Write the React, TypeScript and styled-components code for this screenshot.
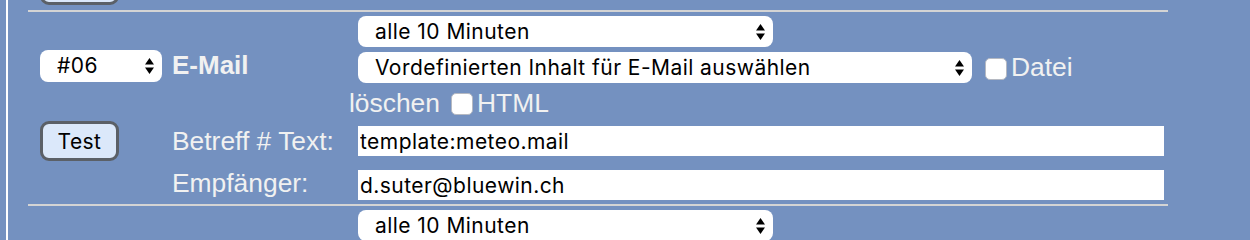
import React from "react"
import styled, { createGlobalStyle } from "styled-components"

const PANEL_BLUE = "#7491c0"
const RULE_GREY = "#d4d4d4"
const LABEL_TEXT = "#f1f1f1"
const CONTROL_FONT = `Inter, "Noto Sans", sans-serif`
const LABEL_FONT = `"Liberation Sans", Arial, sans-serif`

const GlobalStyle = createGlobalStyle`
  html, body {
    background: ${ PANEL_BLUE };
    margin: 0;
    padding: 0;
  }

  body {
    font-family: ${ LABEL_FONT };
  }

  * {
    box-sizing: border-box;
  }
`

const Page = styled.div`
  border-left: 2px solid #ffffff;
  height: 214px;
  margin-left: 6px;
  min-height: 100vh;
  overflow: hidden;
  padding-left: 20px;
`

// tail of the previous entry, only its button's bottom edge is visible
const PreviousRowTail = styled.div`
  align-items: flex-end;
  display: flex;
  height: 10px;
  overflow: hidden;
  padding: 0 0 5px 12px;
  width: 1140px;
`

// head of the next entry, only its first select peeks in
const NextRowHead = styled.div`
  padding: 4px 0 0 330px;
  width: 1140px;
`

const EntryRow = styled.div`
  border-bottom: 2px solid ${ RULE_GREY };
  border-top: 2px solid ${ RULE_GREY };
  display: grid;
  grid-template-columns: 138px 183px 1fr;
  width: 1140px;
`

const ControlCell = styled.div`
  align-items: center;
  display: flex;
  padding-left: 12px;
`

const LabelCell = styled.div`
  align-items: center;
  color: ${ LABEL_TEXT };
  display: flex;
  font-size: 26.4px;
  padding-left: 6px;
`

const EntryTitle = styled.span`
  font-size: 26px;
  font-weight: bold;
`

const OptionsCell = styled.div`
  display: flex;
  flex-direction: column;
  gap: 5px;
  padding: 4px 0 1px 0;
`

const OptionLine = styled.div<{ $indent?: boolean }>`
  align-items: center;
  color: ${ LABEL_TEXT };
  display: flex;
  font-size: 26.4px;
  height: ${ ( p ) => p.$indent ? "31px" : "30px" };
  padding-left: ${ ( p ) => p.$indent ? "9px" : "0" };
`

const FieldCell = styled.div<{ $last?: boolean }>`
  padding: ${ ( p ) => p.$last ? "7px 0 4px 9px" : "7px 0 7px 9px" };
`

const SelectWrap = styled.div<{ $width: number; $height?: number }>`
  display: inline-flex;
  flex-shrink: 0;
  height: ${ ( p ) => p.$height ?? 31 }px;
  position: relative;
  width: ${ ( p ) => p.$width }px;
`

const NativeSelect = styled.select`
  appearance: none;
  background: #ffffff;
  border: none;
  border-radius: 8px;
  color: #000000;
  font-family: ${ CONTROL_FONT };
  font-size: 21px;
  height: 100%;
  letter-spacing: 0.45px;
  outline: none;
  padding: 0 30px 0 17px;
  width: 100%;
`

const SelectArrows = styled.svg`
  pointer-events: none;
  position: absolute;
  right: 8px;
  top: 50%;
  transform: translateY( -50% );
`

const CheckBox = styled.input.attrs( { type: "checkbox" } )<{ $gap?: number }>`
  appearance: none;
  background: #ffffff;
  border: 1px solid #b5b9c2;
  border-radius: 5px;
  flex-shrink: 0;
  height: 22px;
  margin: 2px 4px 0 ${ ( p ) => p.$gap ?? 13 }px;
  width: 22px;
`

const TestButton = styled.button`
  background: #dbe8fa;
  border: 3px solid #5b6067;
  border-radius: 9px;
  color: #000000;
  font-family: ${ CONTROL_FONT };
  font-size: 21px;
  height: 40px;
  letter-spacing: 0.45px;
  padding: 0;
  width: 79px;
`

const TextField = styled.input`
  background: #ffffff;
  border: none;
  border-radius: 0;
  color: #000000;
  display: block;
  font-family: ${ CONTROL_FONT };
  font-size: 21px;
  height: 30px;
  letter-spacing: 0.45px;
  outline: none;
  padding: 0 2px;
  width: 806px;
`

const Select: React.FC<{ width: number; height?: number; value: string }> = ( { width, height, value } ) => (
  <SelectWrap $width={ width } $height={ height }>
    <NativeSelect defaultValue={ value }>
      <option>{ value }</option>
    </NativeSelect>
    <SelectArrows width="9" height="16" viewBox="0 0 9 16">
      <polygon points="0,6.5 4.5,0 9,6.5" fill="#000" />
      <polygon points="0,9.5 9,9.5 4.5,16" fill="#000" />
    </SelectArrows>
  </SelectWrap>
)

export default function App() {
  return (
    <>
      <GlobalStyle />
      <Page>
        <PreviousRowTail>
          <TestButton aria-label="Test" />
        </PreviousRowTail>
        <EntryRow>
          <ControlCell>
            <Select width={ 122 } height={ 32 } value="#06" />
          </ControlCell>
          <LabelCell>
            <EntryTitle>E-Mail</EntryTitle>
          </LabelCell>
          <OptionsCell>
            <OptionLine $indent>
              <Select width={ 415 } value="alle 10 Minuten" />
            </OptionLine>
            <OptionLine $indent>
              <Select width={ 614 } value="Vordefinierten Inhalt für E-Mail auswählen" />
              <CheckBox />
              Datei
            </OptionLine>
            <OptionLine>
              löschen
              <CheckBox $gap={ 11 } />
              HTML
            </OptionLine>
          </OptionsCell>

          <ControlCell>
            <TestButton>Test</TestButton>
          </ControlCell>
          <LabelCell>Betreff # Text:</LabelCell>
          <FieldCell>
            <TextField defaultValue="template:meteo.mail" />
          </FieldCell>

          <ControlCell />
          <LabelCell>Empfänger:</LabelCell>
          <FieldCell $last>
            <TextField defaultValue="d.suter@bluewin.ch" />
          </FieldCell>
        </EntryRow>
        <NextRowHead>
          <Select width={ 415 } value="alle 10 Minuten" />
        </NextRowHead>
      </Page>
    </>
  )
}
